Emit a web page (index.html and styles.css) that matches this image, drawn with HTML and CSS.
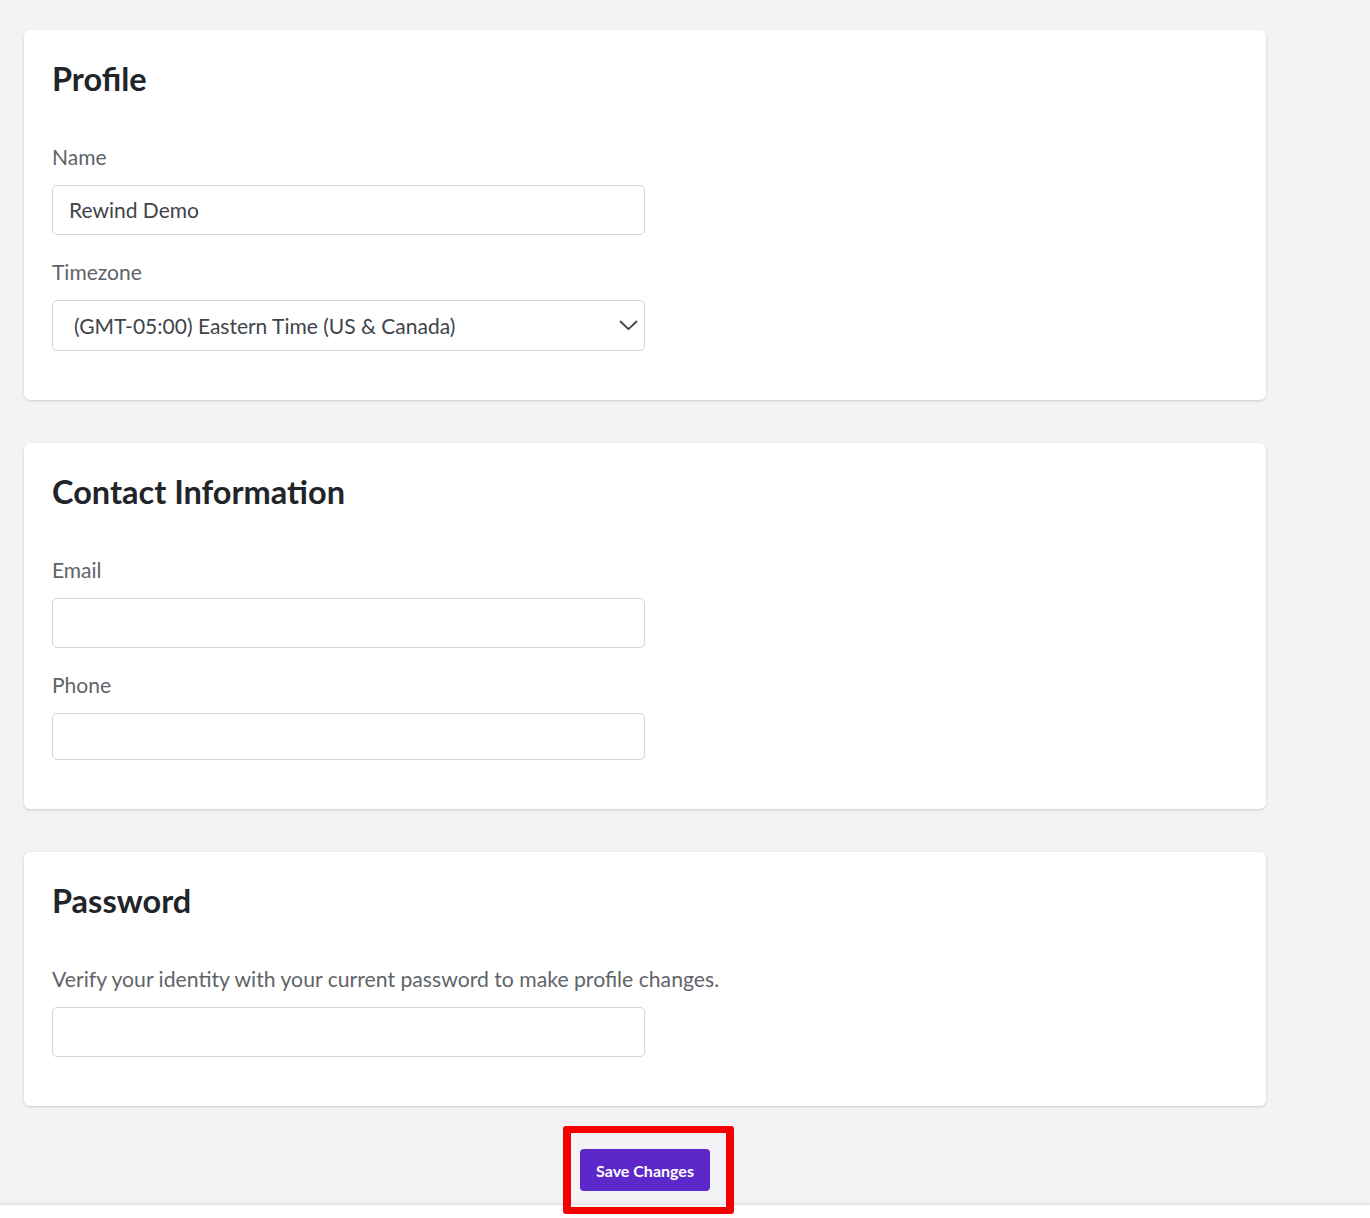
FILE: index.html
```html
<!DOCTYPE html>
<html lang="en">
<head>
<meta charset="utf-8">
<title>Profile settings</title>
<link rel="stylesheet" href="styles.css">
</head>
<body>
<main class="page">
  <div class="stack">
    <section class="card">
      <h2 class="card-title">Profile</h2>
      <div class="field">
        <label class="label">Name</label>
        <div class="input">Rewind Demo</div>
      </div>
      <div class="field">
        <label class="label">Timezone</label>
        <div class="input select">
          <span class="select-text">(GMT-05:00) Eastern Time (US &amp; Canada)</span>
          <svg class="chevron" width="19" height="11" viewBox="0 0 19 11"><path d="M1.5 1.5 L9.5 9.2 L17.5 1.5" fill="none" stroke="#3f444b" stroke-width="1.8" stroke-linecap="round" stroke-linejoin="round"/></svg>
        </div>
      </div>
    </section>

    <section class="card">
      <h2 class="card-title">Contact Information</h2>
      <div class="field">
        <label class="label">Email</label>
        <div class="input"></div>
      </div>
      <div class="field">
        <label class="label">Phone</label>
        <div class="input short"></div>
      </div>
    </section>

    <section class="card">
      <h2 class="card-title">Password</h2>
      <div class="field">
        <p class="label help">Verify your identity with your current password to make profile changes.</p>
        <div class="input"></div>
      </div>
    </section>

    <div class="actions">
      <div class="highlight">
        <button class="btn-primary" type="button">Save Changes</button>
      </div>
    </div>
  </div>
</main>
<footer class="footer"></footer>
</body>
</html>
```
FILE: styles.css
```css
* { box-sizing: border-box; }
html, body { margin: 0; padding: 0; }
body {
  background: #f3f3f5;
  font-family: Lato, "Liberation Sans", Arial, sans-serif;
  color: #212529;
  height: 1218px;
  overflow: hidden;
  display: flex;
  flex-direction: column;
}
.page {
  padding: 30px 0 0 24px;
  height: 1204px;
  flex: none;
}
.stack {
  width: 1242px;
  display: flex;
  flex-direction: column;
  gap: 43px;
}
.card {
  background: #fff;
  border-radius: 6px;
  box-shadow: 0 1px 3px rgba(0,0,0,0.12), 0 1px 2px rgba(0,0,0,0.06);
  padding: 28px 28px 49px;
}
.card-title {
  margin: 0;
  font-size: 32.5px;
  font-weight: 700;
  line-height: 42px;
  color: #212529;
}
.field { margin-top: 25px; }
.card-title + .field { margin-top: 45px; }
.label {
  display: block;
  margin: 0;
  font-size: 21px;
  line-height: 24px;
  color: #5f6368;
}
.help { color: #606469; font-size: 21.2px; }
.input {
  margin-top: 16px;
  width: 593px;
  height: 50px;
  border: 1px solid #d2d4d9;
  border-radius: 5px;
  padding: 0 16px;
  font-size: 21px;
  line-height: 48px;
  color: #3f444b;
  background: #fff;
}
.input.short { height: 47px; }
.select {
  height: 51px;
  display: flex;
  align-items: center;
  justify-content: space-between;
  padding: 0 6px 0 21px;
}
.select-text { line-height: 49px; }
.chevron { flex: none; }
.actions {
  display: flex;
  justify-content: center;
}
.highlight {
  position: relative;
}
.highlight::after {
  content: "";
  position: absolute;
  top: -23px;
  left: -17px;
  right: -24px;
  bottom: -23px;
  border: 7px solid #f50000;
  border-width: 7px 8px 7px 8px;
  border-radius: 3px;
  pointer-events: none;
  z-index: 2;
}
.btn-primary {
  display: block;
  width: 130px;
  height: 42px;
  border: none;
  border-radius: 4px;
  background: #5c28c9;
  color: #fff;
  font-family: Lato, "Liberation Sans", Arial, sans-serif;
  font-size: 16px;
  font-weight: 700;
  padding: 0;
}
.footer {
  flex: 1;
  background: #fff;
  border-top: 1px solid #e2e3e6;
  box-shadow: 0 -1px 2px rgba(0,0,0,0.05);
}
```
